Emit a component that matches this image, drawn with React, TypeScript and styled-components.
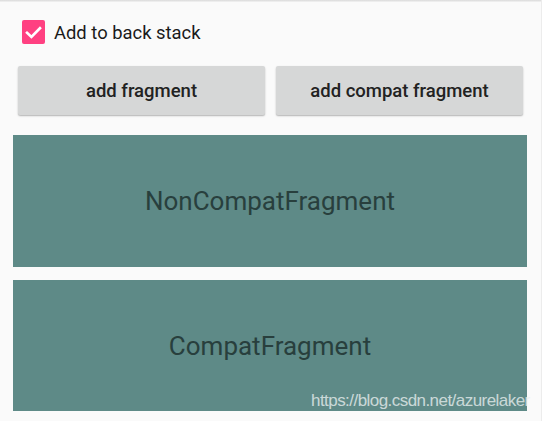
import styled, { createGlobalStyle } from "styled-components";

const GlobalStyle = createGlobalStyle`
  html, body {
    margin: 0;
    padding: 0;
    background: #fafafa;
  }
  * {
    box-sizing: border-box;
  }
`;

const App = () => {
  return (
    <Screen>
      <GlobalStyle />
      <TopShadow />
      <CheckRow>
        <CheckBox>
          <svg width="23" height="23" viewBox="0 0 23 23">
            <path
              d="M5 11.8 L9.4 16 L18 7.2"
              fill="none"
              stroke="#fff"
              strokeWidth="2.6"
              strokeLinecap="square"
            />
          </svg>
        </CheckBox>
        <CheckLabel>Add to back stack</CheckLabel>
      </CheckRow>
      <ButtonRow>
        <RaisedButton>add fragment</RaisedButton>
        <RaisedButton>add compat fragment</RaisedButton>
      </ButtonRow>
      <Panels>
        <FragmentPanel $height={132}>NonCompatFragment</FragmentPanel>
        <FragmentPanel $height={131}>CompatFragment</FragmentPanel>
      </Panels>
      <Watermark>https://blog.csdn.net/azurelaker</Watermark>
    </Screen>
  );
};

const Screen = styled.div`
  position: relative;
  width: 542px;
  height: 421px;
  overflow: hidden;
  background: #fafafa;
  border-right: 1px solid #ececec;
  font-family: Roboto, "Noto Sans", sans-serif;
`;

const TopShadow = styled.div`
  height: 2px;
  background: linear-gradient(#d9d9d9, #f4f4f4);
`;

const CheckRow = styled.div`
  display: flex;
  align-items: center;
  gap: 9px;
  padding: 18px 0 0 22px;
`;

const CheckBox = styled.div`
  width: 23px;
  height: 24px;
  border-radius: 2px;
  background: #ff4081;
  display: flex;
  align-items: center;
  justify-content: center;
`;

const CheckLabel = styled.span`
  font-size: 18.4px;
  color: #1a1a1a;
`;

const ButtonRow = styled.div`
  display: grid;
  grid-template-columns: 247px 247px;
  gap: 11px;
  padding: 0 0 0 18px;
  margin-top: 22px;
`;

const RaisedButton = styled.button`
  height: 49px;
  border: none;
  border-radius: 2px;
  background: #d6d7d7;
  box-shadow: 0 1px 2px rgba(0, 0, 0, 0.22), 0 1px 1px rgba(0, 0, 0, 0.08);
  font-family: Roboto, "Noto Sans", sans-serif;
  font-weight: 500;
  font-size: 18.5px;
  color: #222;
  padding: 0;
`;

const Panels = styled.div`
  display: flex;
  flex-direction: column;
  gap: 13px;
  margin: 20px 14px 0 13px;
`;

const FragmentPanel = styled.div<{ $height: number }>`
  height: ${(p) => p.$height}px;
  background: #5e8a87;
  display: flex;
  align-items: center;
  justify-content: center;
  font-size: 26px;
  color: #283f3d;
`;

const Watermark = styled.div`
  position: absolute;
  left: 311px;
  top: 391px;
  font-family: "Liberation Sans", Arial, sans-serif;
  font-size: 17px;
  letter-spacing: -0.55px;
  color: rgba(232, 238, 238, 0.8);
  white-space: nowrap;
`;

export default App;
